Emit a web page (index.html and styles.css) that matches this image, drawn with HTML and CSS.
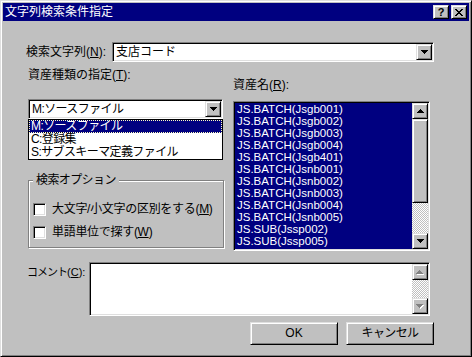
FILE: index.html
```html
<!DOCTYPE html>
<html lang="ja">
<head>
<meta charset="utf-8">
<title>文字列検索条件指定</title>
<link rel="stylesheet" href="styles.css">
</head>
<body>
<div class="window">
  <div class="titlebar">
    <span class="title">文字列検索条件指定</span>
    <div class="title-buttons">
      <span class="tbtn help">?</span>
      <span class="tbtn close"><svg width="8" height="7" viewBox="0 0 8 7"><path d="M0 0h2v1H0zM6 0h2v1H6zM1 1h2v1H1zM5 1h2v1H5zM2 2h4v1H2zM3 3h2v1H3zM2 4h4v1H2zM1 5h2v1H1zM5 5h2v1H5zM0 6h2v1H0zM6 6h2v1H6z"/></svg></span>
    </div>
  </div>
  <div class="client">
    <div class="row-search">
      <label class="lbl-search">検索文字列(<u>N</u>):</label>
      <div class="combo combo-search">
        <span class="combo-text">支店コード</span>
        <span class="drop-btn"><svg width="7" height="4" viewBox="0 0 7 4"><path d="M0 0h7v1H6v1H5v1H4v1H3V3H2V2H1V1H0z"/></svg></span>
      </div>
    </div>
    <div class="cols">
      <div class="col-left">
        <div class="lbl">資産種類の指定(<u>T</u>):</div>
        <div class="combo-wrap">
          <div class="combo combo-type">
            <span class="combo-text kana">M:ソースファイル</span>
            <span class="drop-btn"><svg width="7" height="4" viewBox="0 0 7 4"><path d="M0 0h7v1H6v1H5v1H4v1H3V3H2V2H1V1H0z"/></svg></span>
          </div>
          <ul class="droplist kana">
            <li class="sel">M:ソースファイル</li>
            <li>C:登録集</li>
            <li>S:サブスキーマ定義ファイル</li>
          </ul>
        </div>
        <div class="group">
          <span class="group-title kana">検索オプション</span>
          <div class="check-row first"><span class="checkbox"></span><span>大文字/小文字の区別をする(<u>M</u>)</span></div>
          <div class="check-row"><span class="checkbox"></span><span>単語単位で探す(<u>W</u>)</span></div>
        </div>
      </div>
      <div class="col-right">
        <div class="lbl lbl-asset">資産名(<u>R</u>):</div>
        <div class="listbox">
          <ul class="items">
            <li>JS.BATCH(Jsgb001)</li>
            <li>JS.BATCH(Jsgb002)</li>
            <li>JS.BATCH(Jsgb003)</li>
            <li>JS.BATCH(Jsgb004)</li>
            <li>JS.BATCH(Jsgb401)</li>
            <li>JS.BATCH(Jsnb001)</li>
            <li>JS.BATCH(Jsnb002)</li>
            <li>JS.BATCH(Jsnb003)</li>
            <li>JS.BATCH(Jsnb004)</li>
            <li>JS.BATCH(Jsnb005)</li>
            <li>JS.SUB(Jssp002)</li>
            <li>JS.SUB(Jssp005)</li>
          </ul>
          <div class="vscroll">
            <span class="sbtn"><svg width="7" height="4" viewBox="0 0 7 4"><path d="M3 0h1v1h1v1h1v1h1v1H0V3h1V2h1V1h1z"/></svg></span>
            <span class="thumb"></span>
            <span class="track"></span>
            <span class="sbtn"><svg width="7" height="4" viewBox="0 0 7 4"><path d="M0 0h7v1H6v1H5v1H4v1H3V3H2V2H1V1H0z"/></svg></span>
          </div>
        </div>
      </div>
    </div>
    <div class="row-comment">
      <label class="lbl-comment"><span class="kana-tight">コメント</span>(<u>C</u>):</label>
      <div class="textarea">
        <div class="ta-body"></div>
        <div class="vscroll">
          <span class="sbtn"><svg width="8" height="5" viewBox="0 0 8 5"><path fill="#fff" d="M4 1h1v1h1v1h1v1h1v1H1V4h1V3h1V2h1z"/><path fill="#808080" d="M3 0h1v1h1v1h1v1h1v1H0V3h1V2h1V1h1z"/></svg></span>
          <span class="track"></span>
          <span class="sbtn"><svg width="8" height="5" viewBox="0 0 8 5"><path fill="#fff" d="M1 1h7v1H7v1H6v1H5v1H4V4H3V3H2V2H1z"/><path fill="#808080" d="M0 0h7v1H6v1H5v1H4v1H3V3H2V2H1V1H0z"/></svg></span>
        </div>
      </div>
    </div>
    <div class="row-buttons">
      <button class="btn">OK</button>
      <button class="btn kana">キャンセル</button>
    </div>
  </div>
</div>
</body>
</html>
```

FILE: styles.css
```css
* {
  box-sizing: border-box;
  margin: 0;
  padding: 0;
}

html,
body {
  width: 472px;
  height: 357px;
  overflow: hidden;
  background: #c0c0c0;
}

body {
  font-family: "Liberation Sans", "Noto Sans CJK JP", sans-serif;
  font-size: 12px;
  line-height: 13px;
  color: #000;
}

u {
  text-decoration: underline;
  text-underline-offset: 1px;
}

ul {
  list-style: none;
}

.kana {
  letter-spacing: -0.6px;
}

.kana-tight {
  letter-spacing: -1px;
}

/* bevels */
.window,
.tbtn,
.sbtn,
.thumb,
.drop-btn,
.btn {
  border: 1px solid;
  border-color: #dfdfdf #000 #000 #dfdfdf;
  box-shadow: inset 1px 1px 0 #fff, inset -1px -1px 0 #808080;
  background-color: #c0c0c0;
}

.combo,
.listbox,
.textarea {
  border: 1px solid;
  border-color: #808080 #fff #fff #808080;
  box-shadow: inset 1px 1px 0 #000, inset -1px -1px 0 #dfdfdf;
  padding: 1px;
  background: #fff;
}

.window {
  width: 472px;
  height: 357px;
  padding: 2px;
  display: flex;
  flex-direction: column;
}

.titlebar {
  flex: none;
  height: 18px;
  background: #000080;
  color: #fff;
  display: flex;
  align-items: center;
  justify-content: space-between;
  padding: 0 2px 0 2px;
}

.title {
  font-size: 12px;
  line-height: 14px;
}

.title-buttons {
  display: flex;
  gap: 2px;
}

.tbtn {
  width: 16px;
  height: 14px;
  display: flex;
  align-items: center;
  justify-content: center;
  color: #000;
}

.help {
  font-family: "Liberation Sans", sans-serif;
  font-weight: bold;
  font-size: 11px;
  line-height: 12px;
}

.client {
  flex: 1;
  padding: 0 35px 0 23px;
  display: flex;
  flex-direction: column;
}

/* search row */
.row-search {
  display: flex;
  align-items: center;
  margin-top: 21px;
}

.lbl-search {
  width: 86px;
}

.combo {
  height: 20px;
  display: flex;
  align-items: center;
}

.combo-search {
  width: 322px;
}

.combo-text {
  flex: 1;
  padding-left: 2px;
  white-space: nowrap;
}

.drop-btn {
  width: 16px;
  height: 16px;
  display: flex;
  align-items: center;
  justify-content: center;
}

/* columns */
.cols {
  display: flex;
  gap: 8px;
  margin-top: 6px;
  margin-left: 2px;
}

.col-left {
  width: 197px;
}

.col-right {
  width: 197px;
}

.lbl {
  height: 14px;
  line-height: 14px;
  white-space: nowrap;
}

.combo-wrap {
  position: relative;
  width: 195px;
  margin-top: 17px;
}

.combo-type {
  width: 195px;
}

.droplist {
  position: absolute;
  top: 100%;
  left: 0;
  width: 195px;
  border: 1px solid #000;
  background: #fff;
  z-index: 2;
}

.droplist li {
  height: 13px;
  line-height: 13px;
  padding-left: 2px;
  white-space: nowrap;
}

.droplist li.sel {
  background: #000080;
  color: #fff;
  outline: 1px dotted #ffffc0;
  outline-offset: -1px;
}

/* group box */
.group {
  width: 196px;
  height: 68px;
  margin-top: 61px;
  border: 1px solid #808080;
  box-shadow: 1px 1px 0 #fff, inset 1px 1px 0 #fff;
  padding-left: 4px;
}

.group-title {
  display: inline-block;
  margin: -7px 0 0 0;
  padding: 0 3px;
  height: 13px;
  line-height: 13px;
  background: #c0c0c0;
  vertical-align: top;
}

.check-row {
  display: flex;
  align-items: center;
  gap: 6px;
  height: 13px;
  margin-top: 10px;
  white-space: nowrap;
  letter-spacing: -0.3px;
}

.check-row.first {
  margin-top: 9px;
}

.checkbox {
  flex: none;
  width: 13px;
  height: 13px;
  background: #fff;
  border: 1px solid;
  border-color: #808080 #fff #fff #808080;
  box-shadow: inset 1px 1px 0 #000, inset -1px -1px 0 #dfdfdf;
}

/* listbox */
.lbl-asset {
  margin-top: 10px;
}

.listbox {
  margin-top: 9px;
  width: 197px;
  height: 150px;
  display: flex;
}

.items {
  flex: 1;
  background: #000080;
  color: #fff;
  font-size: 11.5px;
}

.items li {
  height: 12px;
  line-height: 12px;
  padding-left: 2px;
  white-space: nowrap;
  overflow: hidden;
}

.vscroll {
  flex: none;
  width: 16px;
  display: flex;
  flex-direction: column;
}

.sbtn {
  flex: none;
  height: 16px;
  display: flex;
  align-items: center;
  justify-content: center;
}

.thumb {
  flex: none;
  height: 84px;
}

.track {
  flex: 1;
  background-image: repeating-conic-gradient(#c0c0c0 0 25%, #fff 0 50%);
  background-size: 2px 2px;
}

/* comment */
.row-comment {
  display: flex;
  margin-top: 11px;
  margin-left: 1px;
}

.lbl-comment {
  width: 62px;
  padding-top: 4px;
  white-space: nowrap;
  font-size: 11px;
}

.textarea {
  width: 341px;
  height: 54px;
  display: flex;
}

.ta-body {
  flex: 1;
}

/* buttons */
.row-buttons {
  display: flex;
  justify-content: flex-end;
  gap: 8px;
  margin-top: 6px;
}

.btn {
  width: 88px;
  height: 23px;
  font-family: "Liberation Sans", "Noto Sans CJK JP", sans-serif;
  font-size: 12px;
  line-height: 13px;
  color: #000;
}
```
